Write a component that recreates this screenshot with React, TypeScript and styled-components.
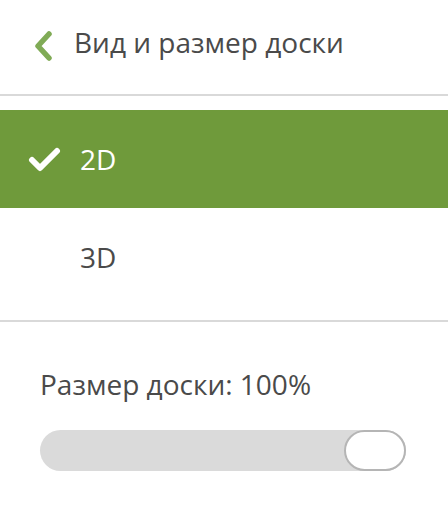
import React, { useState } from 'react';
import styled, { createGlobalStyle } from 'styled-components';

const GlobalStyle = createGlobalStyle`
  html, body {
    margin: 0;
    padding: 0;
    background: #ffffff;
    font-family: 'Open Sans', 'Noto Sans', sans-serif;
  }
`;

const Panel = styled.div`
  width: 448px;
  height: 522px;
  background: #fff;
  color: #4a4a4a;
  overflow: hidden;
`;

const Header = styled.div`
  display: flex;
  align-items: center;
  height: 96px;
  padding: 0 0 10px 32px;
  border-bottom: 2px solid #d9d9d9;
  box-sizing: border-box;
`;

const BackButton = styled.button`
  display: flex;
  align-items: center;
  justify-content: center;
  width: 22px;
  height: 32px;
  padding: 0;
  margin: 7px 20px 0 0;
  border: none;
  background: none;
  cursor: pointer;
`;

const Title = styled.h1`
  margin: 0;
  font-size: 28px;
  line-height: 38px;
  font-weight: 400;
  color: #4a4a4a;
`;

const OptionList = styled.div`
  display: flex;
  flex-direction: column;
  padding: 14px 0;
  border-bottom: 2px solid #d9d9d9;
`;

const Option = styled.div<{ $active?: boolean }>`
  display: flex;
  align-items: center;
  height: 98px;
  padding-left: 28px;
  background: ${p => (p.$active ? '#6f9a3b' : 'transparent')};
  color: ${p => (p.$active ? '#ffffff' : '#4a4a4a')};
  cursor: pointer;
`;

const CheckSlot = styled.span`
  display: flex;
  align-items: center;
  width: 52px;
`;

const OptionLabel = styled.span`
  font-size: 28px;
  line-height: 38px;
  font-weight: 400;
`;

const SizeSection = styled.div`
  padding: 43px 42px 0 40px;
`;

const SizeLabel = styled.div`
  font-size: 28px;
  line-height: 38px;
  color: #4a4a4a;
  margin-bottom: 27px;
`;

const Track = styled.div`
  position: relative;
  height: 41px;
  border-radius: 21px;
  background: #dadada;
`;

const Knob = styled.div`
  position: absolute;
  top: 0;
  width: 62px;
  height: 41px;
  box-sizing: border-box;
  border-radius: 21px;
  border: 2px solid #b5b5b5;
  background: #fff;
`;

const Chevron = () => (
  <svg width="20" height="30" viewBox="0 0 20 30">
    <path d="M16 3 L5 15 L16 27" fill="none" stroke="#80ab56" strokeWidth="5.5" strokeLinecap="round" strokeLinejoin="round" />
  </svg>
);

const Check = () => (
  <svg width="34" height="26" viewBox="0 0 34 26">
    <path d="M4 14 L12 22 L29 5" fill="none" stroke="#ffffff" strokeWidth="6" strokeLinecap="round" strokeLinejoin="round" />
  </svg>
);

const App: React.FC = () => {
  const [mode, setMode] = useState<'2D' | '3D'>('2D');
  const size = 100;

  return (
    <Panel>
      <GlobalStyle />
      <Header>
        <BackButton>
          <Chevron />
        </BackButton>
        <Title>Вид и размер доски</Title>
      </Header>
      <OptionList>
        {(['2D', '3D'] as const).map(m => (
          <Option key={m} $active={mode === m} onClick={() => setMode(m)}>
            <CheckSlot>{mode === m && <Check />}</CheckSlot>
            <OptionLabel>{m}</OptionLabel>
          </Option>
        ))}
      </OptionList>
      <SizeSection>
        <SizeLabel>Размер доски: {size}%</SizeLabel>
        <Track>
          <Knob style={{ left: `calc(${size}% - ${(size / 100) * 62}px)` }} />
        </Track>
      </SizeSection>
    </Panel>
  );
};

export default App;
